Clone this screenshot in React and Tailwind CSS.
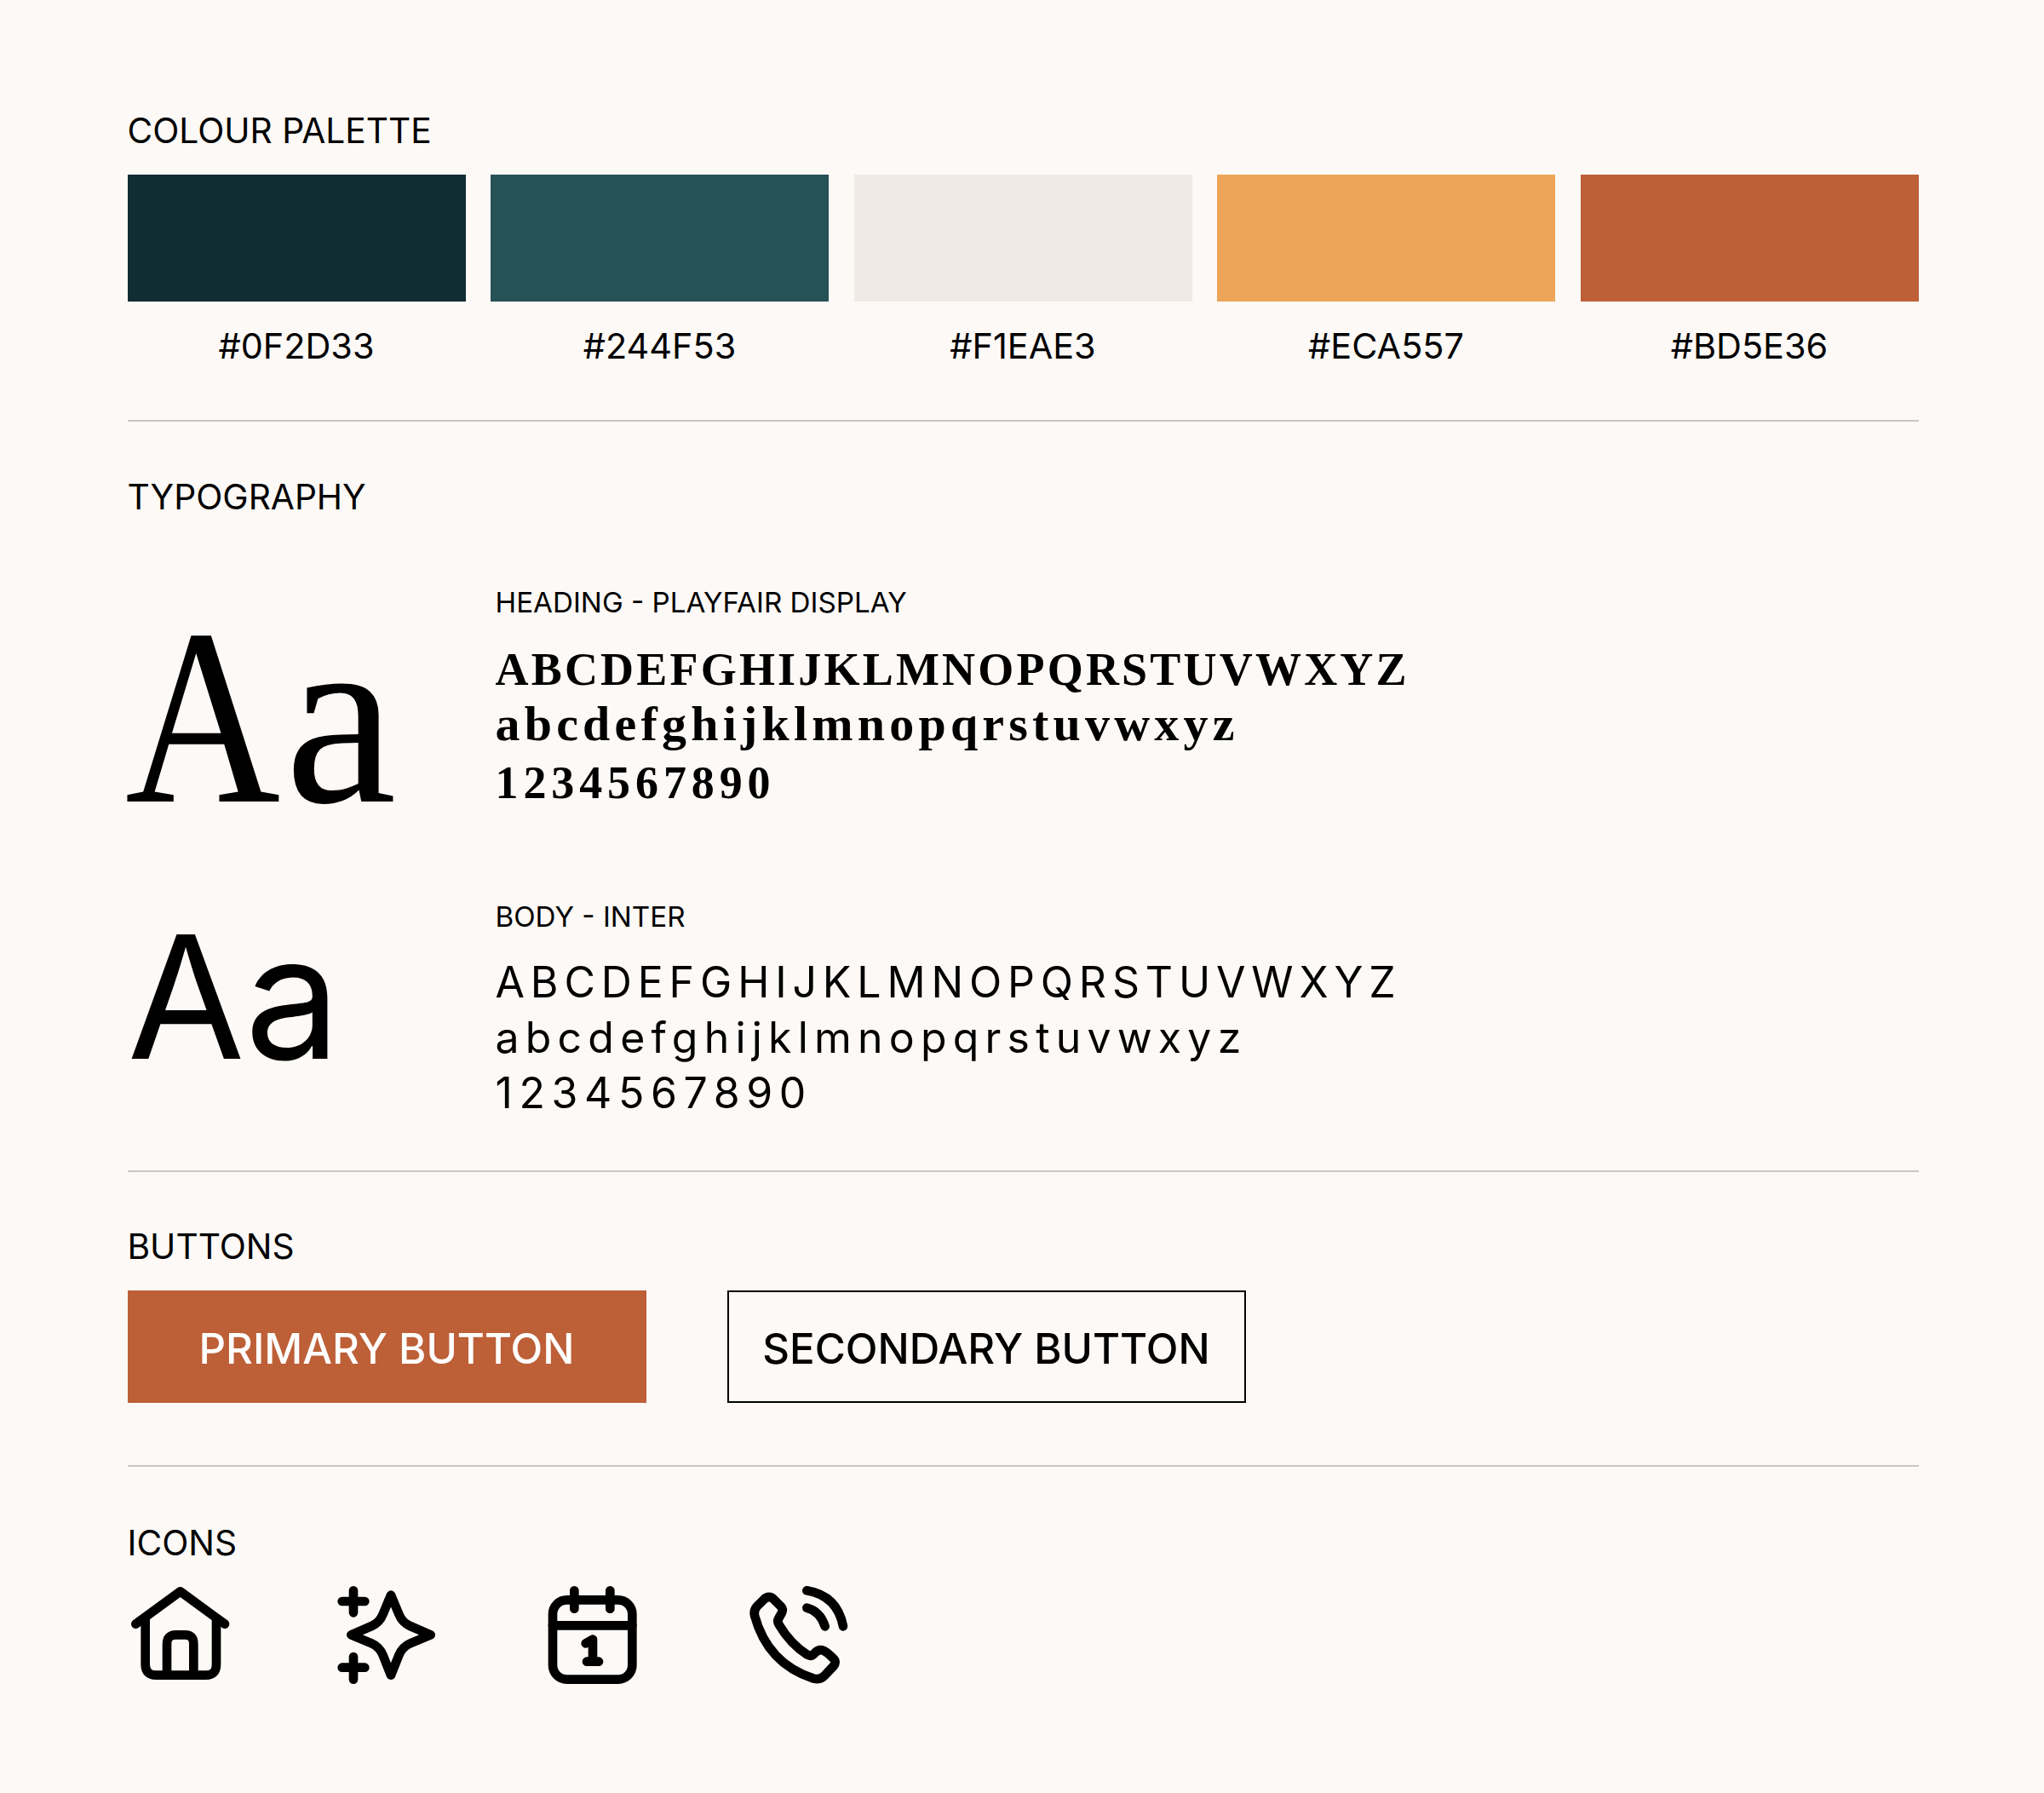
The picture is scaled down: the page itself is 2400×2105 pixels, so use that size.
import React from "react";

const inter = "font-['Inter',sans-serif]";
const serif = "font-['Liberation_Serif',serif]";

const swatches = [
    { hex: "#0F2D33", className: "bg-[#112d34]" },
    { hex: "#244F53", className: "bg-[#265156]" },
    { hex: "#F1EAE3", className: "bg-[#f1eae4]" },
    { hex: "#ECA557", className: "bg-[#eca558]" },
    { hex: "#BD5E36", className: "bg-[#bd5f37]" },
];

const Divider = ({ className }) => <div className={`h-[2px] w-[2103px] bg-[#c9c7c3] ${className}`} />;

const SectionTitle = ({ children, className }) => (
    <h2 className={`h-[44px] text-[40.7px] leading-[44px] font-normal ${className}`}>{children}</h2>
);

const HomeIcon = () => (
    <svg viewBox="0 0 420 420" className="w-[140px] h-[140px]" fill="none" stroke="#000" strokeWidth="32" strokeLinecap="round" strokeLinejoin="round">
        <path d="M58 170L215 55L372 170" />
        <path d="M92 150V312Q92 350 130 350H305Q342 350 342 312V150" />
        <path d="M168 345V240Q168 208 200 208H232Q262 208 262 240V345" />
    </svg>
);

const SparkleIcon = () => (
    <svg viewBox="0 0 420 420" className="w-[140px] h-[140px]" fill="none" stroke="#000" strokeWidth="32" strokeLinecap="round" strokeLinejoin="round">
        <path d="M222 68L250 135Q262 165 290 177L362 208L290 238Q262 250 250 280L222 350L194 280Q182 250 154 238L82 208L154 177Q182 165 194 135Z" />
        <path d="M90 52V130M50 90H130" />
        <path d="M90 285V365M50 323H130" />
    </svg>
);

const CalendarIcon = () => (
    <svg viewBox="0 0 420 420" className="w-[140px] h-[140px]" fill="none" stroke="#000" strokeWidth="32" strokeLinecap="round" strokeLinejoin="round">
        <rect x="72" y="85" width="280" height="280" rx="50" />
        <path d="M148 52V116M274 52V116" />
        <path d="M72 175H352" />
        <path d="M188 238L213 224V302M192 302H234" />
    </svg>
);

const PhoneIcon = () => (
    <svg viewBox="0 0 420 420" className="w-[140px] h-[140px]" fill="none" stroke="#000" strokeWidth="32" strokeLinecap="round" strokeLinejoin="round">
        <path d="M100 75Q112 73 122 83L146 107Q156 118 150 130L140 148Q132 160 140 172Q180 240 240 278Q254 286 266 272Q280 256 298 264Q310 270 322 282L332 292Q344 304 332 318L300 352Q286 368 262 362Q100 310 54 140Q50 122 62 108L84 86Q92 77 100 75Z" />
        <path d="M238 52Q345 70 366 178" />
        <path d="M238 113Q285 125 302 178" />
    </svg>
);

const App = () => {
    return (
        <div className={`w-[2400px] h-[2105px] bg-[#fcf9f6] text-black pl-[149.5px] pt-[132px] overflow-hidden ${inter}`}>
            <SectionTitle>COLOUR PALETTE</SectionTitle>
            <div className="mt-[29px] grid grid-cols-5 gap-x-[29.5px] w-[2103px]">
                {swatches.map((swatch) => (
                    <div key={swatch.hex}>
                        <div className={`h-[149px] ${swatch.className}`} />
                        <p className="mt-[30px] h-[44px] text-[41.4px] leading-[44px] text-center">{swatch.hex}</p>
                    </div>
                ))}
            </div>
            <Divider className="mt-[65px]" />

            <SectionTitle className="mt-[67px]">TYPOGRAPHY</SectionTitle>
            <div className="mt-[81px] flex">
                <div className={`w-[432px] -ml-[3px] mr-[3px] pt-[7px] text-[295px] leading-none whitespace-nowrap ${serif}`}>
                    <span className="inline-block w-[188px] origin-left scale-x-[.855]">A</span>
                    <span>a</span>
                </div>
                <div>
                    <p className="h-[40px] text-[33.2px] leading-[40px]">HEADING - PLAYFAIR DISPLAY</p>
                    <div className={`mt-[27px] font-bold ${serif}`}>
                        <p className="h-[64px] text-[54px] leading-[64px] tracking-[3.2px]">ABCDEFGHIJKLMNOPQRSTUVWXYZ</p>
                        <p className="h-[63px] text-[58px] leading-[63px] tracking-[5.2px]">abcdefghijklmnopqrstuvwxyz</p>
                        <p className="h-[76px] text-[54px] leading-[76px] tracking-[5.9px]">1234567890</p>
                    </div>
                </div>
            </div>
            <div className="mt-[66.5px] flex">
                <div className="w-[432px] pt-[14px] text-[200px] leading-none">Aa</div>
                <div>
                    <p className="h-[40px] text-[33.2px] leading-[40px]">BODY - INTER</p>
                    <div className="mt-[25px] text-[50px]">
                        <p className="h-[65px] leading-[65px] tracking-[6.85px]">ABCDEFGHIJKLMNOPQRSTUVWXYZ</p>
                        <p className="h-[65px] leading-[65px] tracking-[7.2px]">abcdefghijklmnopqrstuvwxyz</p>
                        <p className="h-[65px] leading-[65px] tracking-[7.6px]">1234567890</p>
                    </div>
                </div>
            </div>
            <Divider className="mt-[58px]" />

            <SectionTitle className="mt-[66px]">BUTTONS</SectionTitle>
            <div className="mt-[29px] flex gap-[95px]">
                <button className="w-[609px] h-[132px] pt-[6px] bg-[#bd5f37] text-white text-[49.2px] font-medium">PRIMARY BUTTON</button>
                <button className="w-[609px] h-[132px] pt-[6px] border-2 border-black text-[49.2px] font-medium">SECONDARY BUTTON</button>
            </div>
            <Divider className="mt-[73.5px]" />

            <SectionTitle className="mt-[68px]">ICONS</SectionTitle>
            <div className="mt-[16px] -ml-[9.5px] flex">
                <HomeIcon />
                <div className="ml-[104.5px]"><SparkleIcon /></div>
                <div className="ml-[100px]"><CalendarIcon /></div>
                <div className="ml-[103px]"><PhoneIcon /></div>
            </div>
        </div>
    );
};

export default App;
